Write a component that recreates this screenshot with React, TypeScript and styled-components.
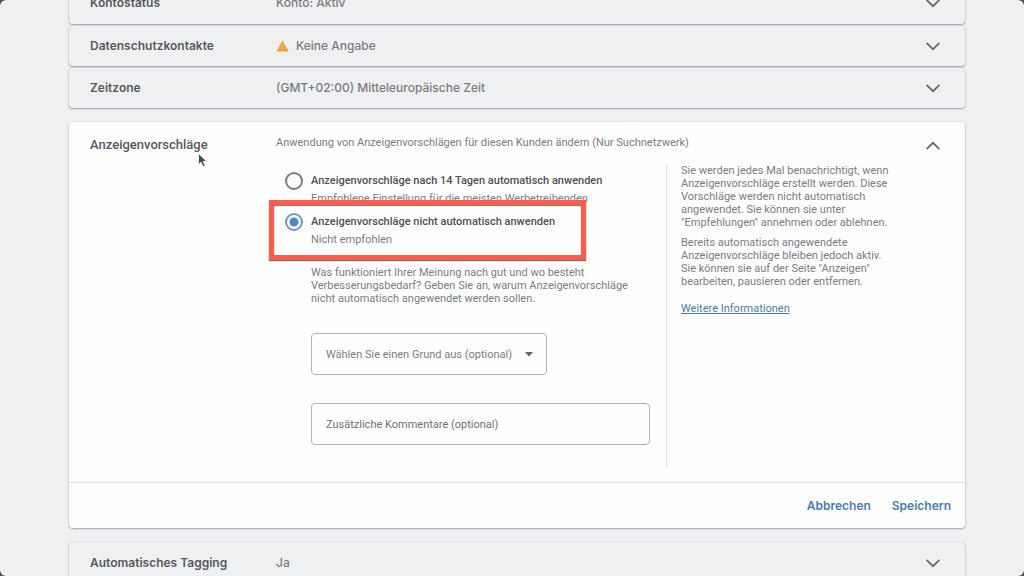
import React from 'react';
import styled, { createGlobalStyle, css } from 'styled-components';

const GlobalStyle = createGlobalStyle`
  *, *::before, *::after { box-sizing: border-box; }
  body {
    margin: 0;
    background: #4a4a4b;
    font-family: Roboto, "Liberation Sans", sans-serif;
    font-size: 11px;
    line-height: 13px;
    color: #7b7c7e;
    overflow: hidden;
  }
  button, input, select { font: inherit; color: inherit; }
  h2, p, dl, fieldset { margin: 0; padding: 0; border: 0; min-width: 0; }
`;

const Viewport = styled.div`
  position: relative;
  height: 100vh;
  overflow: hidden;
  border-radius: 6px;
  background: #eff0f2;
`;

const Settings = styled.main`
  display: flex;
  flex-direction: column;
  gap: 14px;
  margin-top: -18px;
  padding: 0 59px 0 69px;
`;

const cardSurface = css`
  border-radius: 4px;
  box-shadow: 0 1px 2px rgba(50, 54, 60, 0.4), 0 0 2px rgba(50, 54, 60, 0.14);
`;

const Group = styled.section`
  display: flex;
  flex-direction: column;
  gap: 2px;
`;

const RowButton = styled.button`
  ${cardSurface}
  display: grid;
  grid-template-columns: 186px 1fr 16px;
  align-items: center;
  height: 40px;
  padding: 0 24px 0 21px;
  border: 0;
  background: #eff0f2;
  font-family: Inter, Roboto, sans-serif;
  font-size: 12px;
  line-height: 16px;
  text-align: left;

  &:first-child { height: 42px; }
`;

const RowName = styled.span`
  color: #58595b;
  font-weight: 600;
`;

const RowValue = styled.span`
  display: flex;
  align-items: center;
  gap: 7px;
  color: #7b7c7e;
  font-weight: 500;
`;

const OpenCard = styled.section`
  ${cardSurface}
  background: #fefefe;
`;

const CardBody = styled.div`
  display: grid;
  grid-template-columns: 186px 1fr;
  padding: 14px 24px 14px 21px;
`;

const CardTitle = styled.h2`
  padding-top: 1px;
  color: #58595b;
  font-size: 13px;
  line-height: 16px;
  font-weight: 500;
`;

const Detail = styled.div`
  display: flex;
  flex-direction: column;
  gap: 14px;
`;

const DetailHeader = styled.div`
  display: flex;
  justify-content: space-between;
  height: 14px;
`;

const Collapse = styled.button`
  display: flex;
  width: 16px;
  height: 16px;
  margin-top: 2px;
  padding: 0;
  border: 0;
  background: none;
`;

const Columns = styled.div`
  display: grid;
  grid-template-columns: 390px 1fr;
  min-height: 304px;
`;

const Form = styled.form`
  padding: 8px 16px 0 9px;
`;

const Options = styled.fieldset`
  display: flex;
  flex-direction: column;
  gap: 6px;
`;

const Option = styled.div`
  position: relative;
  display: grid;
  grid-template-columns: 18px 1fr;
  column-gap: 8px;
  align-items: start;
`;

const Radio = styled.input`
  appearance: none;
  width: 18px;
  height: 18px;
  margin: 0;
  border: 2px solid #7b7c7e;
  border-radius: 50%;
  background: #fff;

  &:checked {
    border-color: #6b98cd;
    background: radial-gradient(circle, #5288c7 4px, #fff 5px);
  }
`;

const OptionText = styled.label`
  display: flex;
  flex-direction: column;
`;

const OptionName = styled.span`
  color: #4e4f51;
  font-weight: 500;
  line-height: 18px;
`;

const OptionHint = styled.span`
  line-height: 17px;
`;

const Highlight = styled.span`
  position: absolute;
  inset: -13px 64px -12px -16px;
  border: 5px solid #fc5c4d;
  box-shadow: 0 1px 1px #77706f, inset 0 1px 1px #77706f;
  pointer-events: none;
`;

const Fields = styled.div`
  display: flex;
  flex-direction: column;
  align-items: flex-start;
  gap: 28px;
  padding: 18px 0 0 26px;
`;

const fieldBox = css`
  height: 42px;
  padding: 0 14px;
  border: 1px solid #b4b5b7;
  border-radius: 4px;
  background: #fefefe;
  color: #7b7c7e;
`;

const SelectWrap = styled.div`
  position: relative;
  width: 236px;
`;

const Select = styled.select`
  ${fieldBox}
  appearance: none;
  width: 100%;
`;

const SelectArrow = styled.svg`
  position: absolute;
  top: 19px;
  right: 14px;
  pointer-events: none;
`;

const Comment = styled.input`
  ${fieldBox}
  width: 100%;

  &::placeholder { color: #6f7072; opacity: 1; }
`;

const Aside = styled.aside`
  display: flex;
  flex-direction: column;
  align-items: flex-start;
  gap: 7px;
  max-width: 232px;
  padding-left: 14px;
  border-left: 1px solid #dedfe1;
`;

const MoreLink = styled.a`
  margin-top: 7px;
  color: #4a7cb4;
`;

const Actions = styled.footer`
  display: flex;
  justify-content: flex-end;
  align-items: center;
  gap: 21px;
  height: 46px;
  padding: 0 14px;
  border-top: 1px solid #e2e3e5;
`;

const ActionButton = styled.button`
  padding: 0;
  border: 0;
  background: none;
  color: #4a7cb4;
  font-family: Inter, Roboto, sans-serif;
  font-size: 12px;
  line-height: 16px;
  font-weight: 600;
`;

const Cursor = styled.svg`
  position: absolute;
  left: 197px;
  top: 152px;
  pointer-events: none;
`;

const Chevron = ({ up = false }: { up?: boolean }) => (
  <svg width="16" height="16" viewBox="0 0 16 16" fill="none" stroke="#66676a" strokeWidth="1.7" aria-hidden="true">
    <path d={up ? 'M1.6 11.2 8 4.8l6.4 6.4' : 'M1.6 4.8 8 11.2l6.4-6.4'} />
  </svg>
);

const WarningIcon = () => (
  <svg width="13" height="14" viewBox="0 0 13 14" aria-hidden="true">
    <path d="M6.5 1.8 12.3 12.3H.7Z" fill="#e9a33b" stroke="#e9a33b" strokeWidth=".4" strokeLinejoin="round" />
    <path d="M6.1 5.8h.9v3h-.9zM6.1 9.8h.9v1h-.9z" fill="#f6d196" />
  </svg>
);

const SettingRow = ({ name, value, warning }: { name: string; value: string; warning?: boolean }) => (
  <RowButton type="button" aria-expanded="false">
    <RowName>{name}</RowName>
    <RowValue>
      {warning && <WarningIcon />}
      {value}
    </RowValue>
    <Chevron />
  </RowButton>
);

export default function App() {
  return (
    <>
      <GlobalStyle />
      <Viewport>
        <Settings>
          <Group>
            <SettingRow name="Kontostatus" value="Konto: Aktiv" />
            <SettingRow name="Datenschutzkontakte" value="Keine Angabe" warning />
            <SettingRow name="Zeitzone" value="(GMT+02:00) Mitteleuropäische Zeit" />
          </Group>

          <OpenCard>
            <CardBody>
              <CardTitle>Anzeigenvorschläge</CardTitle>
              <Detail>
                <DetailHeader>
                  <p>Anwendung von Anzeigenvorschlägen für diesen Kunden ändern (Nur Suchnetzwerk)</p>
                  <Collapse type="button" aria-label="Einklappen" aria-expanded="true">
                    <Chevron up />
                  </Collapse>
                </DetailHeader>
                <Columns>
                  <Form>
                    <Options aria-label="Anzeigenvorschläge">
                      <Option>
                        <Radio type="radio" name="apply" id="apply-auto" />
                        <OptionText htmlFor="apply-auto">
                          <OptionName>Anzeigenvorschläge nach 14 Tagen automatisch anwenden</OptionName>
                          <OptionHint>Empfohlene Einstellung für die meisten Werbetreibenden</OptionHint>
                        </OptionText>
                      </Option>
                      <Option>
                        <Radio type="radio" name="apply" id="apply-manual" defaultChecked />
                        <OptionText htmlFor="apply-manual">
                          <OptionName>Anzeigenvorschläge nicht automatisch anwenden</OptionName>
                          <OptionHint>Nicht empfohlen</OptionHint>
                        </OptionText>
                        <Highlight />
                      </Option>
                    </Options>
                    <Fields>
                      <p>
                        Was funktioniert Ihrer Meinung nach gut und wo besteht Verbesserungsbedarf? Geben Sie an, warum
                        Anzeigenvorschläge nicht automatisch angewendet werden sollen.
                      </p>
                      <SelectWrap>
                        <Select aria-label="Grund">
                          <option>Wählen Sie einen Grund aus (optional)</option>
                        </Select>
                        <SelectArrow width="8" height="5" viewBox="0 0 8 5" aria-hidden="true">
                          <path d="M0 0h8L4 4.6Z" fill="#606163" />
                        </SelectArrow>
                      </SelectWrap>
                      <Comment
                        type="text"
                        aria-label="Zusätzliche Kommentare"
                        placeholder="Zusätzliche Kommentare (optional)"
                      />
                    </Fields>
                  </Form>
                  <Aside>
                    <p>
                      Sie werden jedes Mal benachrichtigt, wenn Anzeigenvorschläge erstellt werden. Diese Vorschläge
                      werden nicht automatisch angewendet. Sie können sie unter "Empfehlungen" annehmen oder ablehnen.
                    </p>
                    <p>
                      Bereits automatisch angewendete Anzeigenvorschläge bleiben jedoch aktiv. Sie können sie auf der
                      Seite "Anzeigen" bearbeiten, pausieren oder entfernen.
                    </p>
                    <MoreLink href="#info">Weitere Informationen</MoreLink>
                  </Aside>
                </Columns>
              </Detail>
            </CardBody>
            <Actions>
              <ActionButton type="button">Abbrechen</ActionButton>
              <ActionButton type="button">Speichern</ActionButton>
            </Actions>
          </OpenCard>

          <Group>
            <SettingRow name="Automatisches Tagging" value="Ja" />
          </Group>
        </Settings>
        <Cursor width="11" height="16" viewBox="0 0 11 16" aria-hidden="true">
          <path
            d="M1.5 1.5v11.2l2.6-2.4 1.9 4.4 2.2-.9-1.9-4.3h3.6Z"
            fill="#4c4c4e"
            stroke="#e9e9ea"
            strokeWidth="1"
          />
        </Cursor>
      </Viewport>
    </>
  );
}
